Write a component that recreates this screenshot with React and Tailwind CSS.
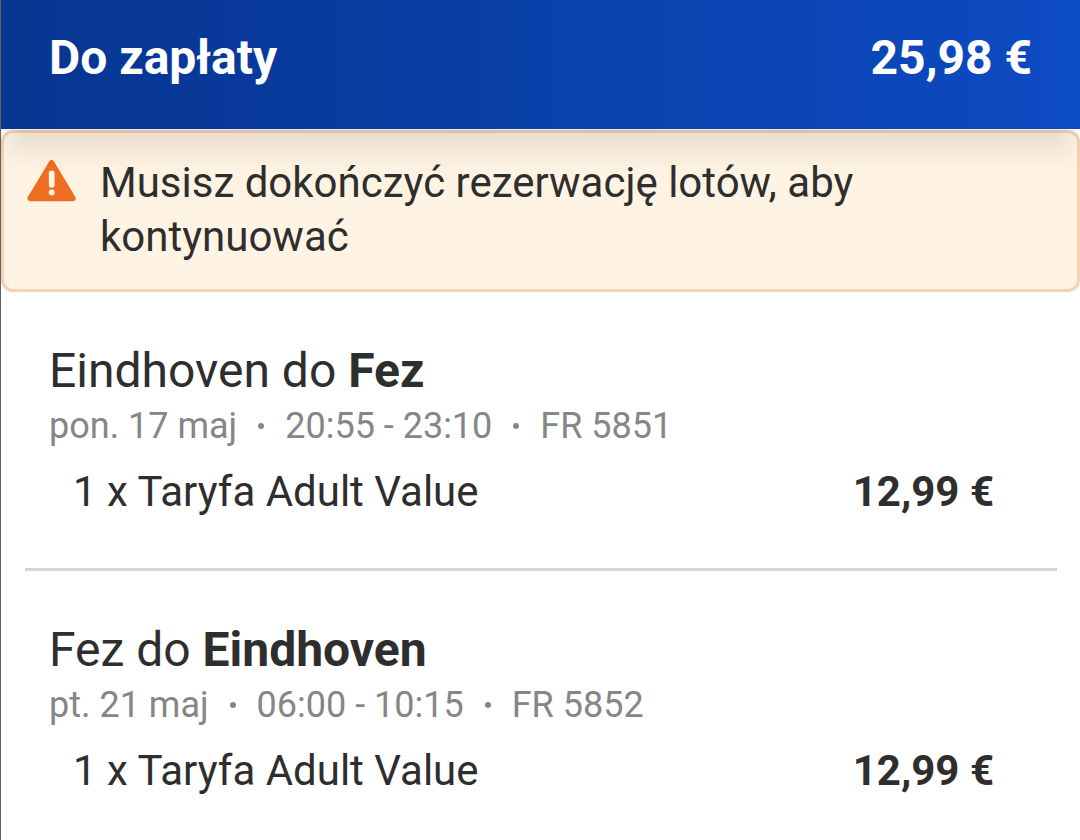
const flights = [
  {
    from: "Eindhoven",
    to: "Fez",
    date: "pon. 17 maj",
    time: "20:55 - 23:10",
    number: "FR 5851",
    fare: "1 x Taryfa Adult Value",
    price: "12,99 €",
  },
  {
    from: "Fez",
    to: "Eindhoven",
    date: "pt. 21 maj",
    time: "06:00 - 10:15",
    number: "FR 5852",
    fare: "1 x Taryfa Adult Value",
    price: "12,99 €",
  },
];

function WarningIcon() {
  return (
    <svg
      className="mt-1 h-[42px] w-[50px] shrink-0"
      viewBox="0 0 50 42"
      aria-hidden="true"
    >
      <path
        d="M22.2 1.4Q24.6 -1.3 27 1.4L48.4 37Q49.9 40.6 46.2 41.2H3Q-.7 40.6 .8 37Z"
        fill="#ed6d23"
      />
      <rect x="21.8" y="10.5" width="5.8" height="17" rx="2.6" fill="#fff4e4" />
      <circle cx="24.7" cy="32.5" r="3" fill="#fff4e4" />
    </svg>
  );
}

function Dot() {
  return <span className="size-1.5 rounded-full bg-[#848687]" aria-hidden="true" />;
}

function Flight({ flight }) {
  return (
    <section className="pt-12 pb-12">
      <div className="px-6">
        <h2 className="text-[48px] leading-[62px]">
          {flight.from} do <strong className="font-bold">{flight.to}</strong>
        </h2>
        <p className="flex items-center gap-[21px] text-[36px] leading-[48px] text-[#848687]">
          <span>{flight.date}</span>
          <Dot />
          <span>{flight.time}</span>
          <Dot />
          <span>{flight.number}</span>
        </p>
      </div>
      <div className="mt-[14px] flex justify-between pr-[63px] pl-12 text-[42px] leading-[56px]">
        <span>{flight.fare}</span>
        <strong className="font-bold">{flight.price}</strong>
      </div>
    </section>
  );
}

export default function App() {
  return (
    <main className="min-h-screen overflow-hidden border-l border-[#606163] bg-white font-['Roboto',sans-serif] text-[#2e2e2e]">
      <header className="relative z-10 flex justify-between bg-linear-to-r from-[#073590] to-[#0d4bc3] px-12 pt-[26px] pb-[39px] text-[48px] leading-[64px] font-bold text-white shadow-[0_32px_24px_-8px_rgba(0,0,0,0.09)]">
        <h1>Do zapłaty</h1>
        <span>25,98 €</span>
      </header>
      <div
        role="alert"
        className="mt-px flex gap-[23px] rounded-[12px] border-3 border-[#f6d2b3] bg-[#fff4e4] pt-[23px] pr-6 pb-[25px] pl-[23px] text-[42px] leading-[54px]"
      >
        <WarningIcon />
        <p className="max-w-[860px]">
          Musisz dokończyć rezerwację lotów, aby kontynuować
        </p>
      </div>
      <div className="mr-[23px] ml-6 divide-y-3 divide-[#d3d5d6]">
        {flights.map((flight) => (
          <Flight key={flight.number} flight={flight} />
        ))}
      </div>
    </main>
  );
}
